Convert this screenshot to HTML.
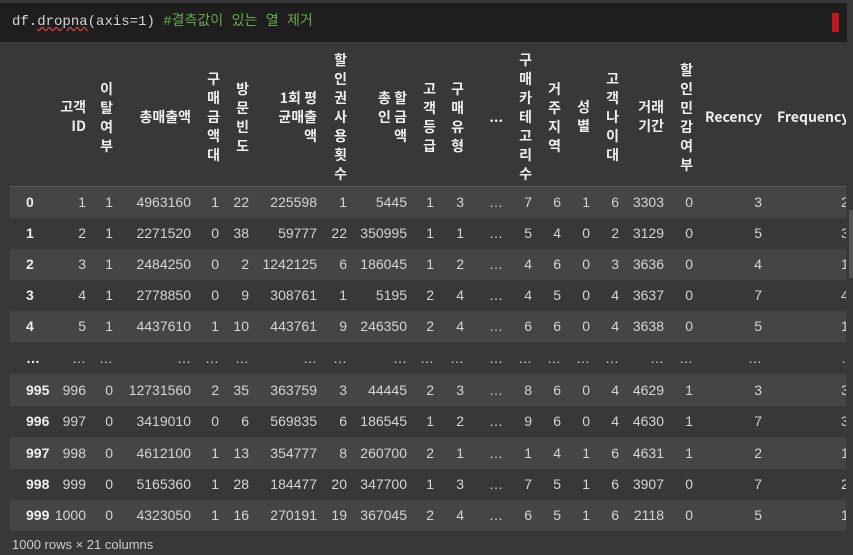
<!DOCTYPE html>
<html><head><meta charset="utf-8"><style>
*{margin:0;padding:0;box-sizing:border-box}
body{width:853px;height:555px;background:#383838;overflow:hidden;position:relative;font-family:"Liberation Sans","Noto Sans CJK KR",sans-serif;color:#d4d4d4}
.code{position:absolute;left:0;top:3px;width:847px;height:39px;background:#1e1e1e;font-family:"Liberation Mono","Noto Sans CJK KR",monospace;font-size:14px;line-height:39px;padding-left:12px;color:#d4d4d4}
.code .cm{color:#6aa84f}
.code u{text-decoration:underline wavy #c04040}
.cur{position:absolute;left:832px;top:13px;width:7px;height:19px;background:#c0181a}
.tbl{position:absolute;left:10px;top:42px;width:836px;height:490px;overflow:hidden}
.hd{position:absolute;left:0;top:0;width:836px;height:145px;border-bottom:1px solid #555}
.h{position:absolute;text-align:right;color:#eee;font-family:"Noto Sans CJK KR","Liberation Sans",sans-serif;font-weight:bold;font-size:14px;line-height:19px;white-space:pre;transform:translateX(-10px)}
.r{position:absolute;left:0;width:836px;font-size:14px}
.r.s{background:#454545}
.r span{position:absolute;top:0;text-align:right;transform:translateX(-10px)}
.r span.i{left:26px;font-weight:bold;color:#eee}
.r span.f{left:841px}
.ft{position:absolute;left:12px;top:537px;font-size:13px;color:#ccc}
.sb{position:absolute;left:849px;top:210px;width:4px;height:68px;background:#555}
</style></head><body>
<div class="code">df.<u>dropna</u>(axis=1) <span class="cm">#결측값이 있는 열 제거</span></div>
<div class="cur"></div>
<div class="tbl">
<div class="hd">
<div class="h" style="right:750px;top:56px">고객
ID</div>
<div class="h" style="right:723px;top:38px">이
탈
여
부</div>
<div class="h" style="right:645px;top:66px">총매출액</div>
<div class="h" style="right:616px;top:28px">구
매
금
액
대</div>
<div class="h" style="right:587px;top:38px">방
문
빈
도</div>
<div class="h" style="right:519px;top:47px">1회 평
균매출
액</div>
<div class="h" style="right:489px;top:9px">할
인
권
사
용
횟
수</div>
<div class="h" style="right:429px;top:47px">총 할
인 금
   액</div>
<div class="h" style="right:400px;top:38px">고
객
등
급</div>
<div class="h" style="right:372px;top:38px">구
매
유
형</div>
<div class="h" style="right:333px;top:66px">...</div>
<div class="h" style="right:304px;top:9px">구
매
카
테
고
리
수</div>
<div class="h" style="right:275px;top:38px">거
주
지
역</div>
<div class="h" style="right:246px;top:56px">성
별</div>
<div class="h" style="right:217px;top:28px">고
객
나
이
대</div>
<div class="h" style="right:172px;top:56px">거래
기간</div>
<div class="h" style="right:143px;top:19px">할
인
민
감
여
부</div>
<div class="h" style="right:74px;top:66px">Recency</div>
<div class="h" style="left:777px;top:66px;text-align:left">Frequency</div>
</div>
</div>
<div style="position:absolute;left:10px;top:0;width:836px;height:555px;overflow:hidden">
<div class="r s" style="top:187px;height:31px;line-height:31px"><span class="i">0</span><span style="right:750px">1</span><span style="right:723px">1</span><span style="right:645px">4963160</span><span style="right:617px">1</span><span style="right:587px">22</span><span style="right:519px">225598</span><span style="right:489px">1</span><span style="right:429px">5445</span><span style="right:402px">1</span><span style="right:372px">3</span><span style="right:333px">…</span><span style="right:304px">7</span><span style="right:275px">6</span><span style="right:246px">1</span><span style="right:217px">6</span><span style="right:172px">3303</span><span style="right:143px">0</span><span style="right:74px">3</span><span class="f">2</span></div>
<div class="r" style="top:218px;height:31px;line-height:31px"><span class="i">1</span><span style="right:750px">2</span><span style="right:723px">1</span><span style="right:645px">2271520</span><span style="right:617px">0</span><span style="right:587px">38</span><span style="right:519px">59777</span><span style="right:489px">22</span><span style="right:429px">350995</span><span style="right:402px">1</span><span style="right:372px">1</span><span style="right:333px">…</span><span style="right:304px">5</span><span style="right:275px">4</span><span style="right:246px">0</span><span style="right:217px">2</span><span style="right:172px">3129</span><span style="right:143px">0</span><span style="right:74px">5</span><span class="f">3</span></div>
<div class="r s" style="top:249px;height:31px;line-height:31px"><span class="i">2</span><span style="right:750px">3</span><span style="right:723px">1</span><span style="right:645px">2484250</span><span style="right:617px">0</span><span style="right:587px">2</span><span style="right:519px">1242125</span><span style="right:489px">6</span><span style="right:429px">186045</span><span style="right:402px">1</span><span style="right:372px">2</span><span style="right:333px">…</span><span style="right:304px">4</span><span style="right:275px">6</span><span style="right:246px">0</span><span style="right:217px">3</span><span style="right:172px">3636</span><span style="right:143px">0</span><span style="right:74px">4</span><span class="f">1</span></div>
<div class="r" style="top:280px;height:31px;line-height:31px"><span class="i">3</span><span style="right:750px">4</span><span style="right:723px">1</span><span style="right:645px">2778850</span><span style="right:617px">0</span><span style="right:587px">9</span><span style="right:519px">308761</span><span style="right:489px">1</span><span style="right:429px">5195</span><span style="right:402px">2</span><span style="right:372px">4</span><span style="right:333px">…</span><span style="right:304px">4</span><span style="right:275px">5</span><span style="right:246px">0</span><span style="right:217px">4</span><span style="right:172px">3637</span><span style="right:143px">0</span><span style="right:74px">7</span><span class="f">4</span></div>
<div class="r s" style="top:311px;height:31px;line-height:31px"><span class="i">4</span><span style="right:750px">5</span><span style="right:723px">1</span><span style="right:645px">4437610</span><span style="right:617px">1</span><span style="right:587px">10</span><span style="right:519px">443761</span><span style="right:489px">9</span><span style="right:429px">246350</span><span style="right:402px">2</span><span style="right:372px">4</span><span style="right:333px">…</span><span style="right:304px">6</span><span style="right:275px">6</span><span style="right:246px">0</span><span style="right:217px">4</span><span style="right:172px">3638</span><span style="right:143px">0</span><span style="right:74px">5</span><span class="f">1</span></div>
<div class="r" style="top:342px;height:32px;line-height:32px"><span class="i">…</span><span style="right:750px">…</span><span style="right:723px">…</span><span style="right:645px">…</span><span style="right:617px">…</span><span style="right:587px">…</span><span style="right:519px">…</span><span style="right:489px">…</span><span style="right:429px">…</span><span style="right:402px">…</span><span style="right:372px">…</span><span style="right:333px">…</span><span style="right:304px">…</span><span style="right:275px">…</span><span style="right:246px">…</span><span style="right:217px">…</span><span style="right:172px">…</span><span style="right:143px">…</span><span style="right:74px">…</span><span class="f">…</span></div>
<div class="r s" style="top:374px;height:32px;line-height:32px"><span class="i">995</span><span style="right:750px">996</span><span style="right:723px">0</span><span style="right:645px">12731560</span><span style="right:617px">2</span><span style="right:587px">35</span><span style="right:519px">363759</span><span style="right:489px">3</span><span style="right:429px">44445</span><span style="right:402px">2</span><span style="right:372px">3</span><span style="right:333px">…</span><span style="right:304px">8</span><span style="right:275px">6</span><span style="right:246px">0</span><span style="right:217px">4</span><span style="right:172px">4629</span><span style="right:143px">1</span><span style="right:74px">3</span><span class="f">3</span></div>
<div class="r" style="top:406px;height:31px;line-height:31px"><span class="i">996</span><span style="right:750px">997</span><span style="right:723px">0</span><span style="right:645px">3419010</span><span style="right:617px">0</span><span style="right:587px">6</span><span style="right:519px">569835</span><span style="right:489px">6</span><span style="right:429px">186545</span><span style="right:402px">1</span><span style="right:372px">2</span><span style="right:333px">…</span><span style="right:304px">9</span><span style="right:275px">6</span><span style="right:246px">0</span><span style="right:217px">4</span><span style="right:172px">4630</span><span style="right:143px">1</span><span style="right:74px">7</span><span class="f">3</span></div>
<div class="r s" style="top:437px;height:32px;line-height:32px"><span class="i">997</span><span style="right:750px">998</span><span style="right:723px">0</span><span style="right:645px">4612100</span><span style="right:617px">1</span><span style="right:587px">13</span><span style="right:519px">354777</span><span style="right:489px">8</span><span style="right:429px">260700</span><span style="right:402px">2</span><span style="right:372px">1</span><span style="right:333px">…</span><span style="right:304px">1</span><span style="right:275px">4</span><span style="right:246px">1</span><span style="right:217px">6</span><span style="right:172px">4631</span><span style="right:143px">1</span><span style="right:74px">2</span><span class="f">1</span></div>
<div class="r" style="top:469px;height:31px;line-height:31px"><span class="i">998</span><span style="right:750px">999</span><span style="right:723px">0</span><span style="right:645px">5165360</span><span style="right:617px">1</span><span style="right:587px">28</span><span style="right:519px">184477</span><span style="right:489px">20</span><span style="right:429px">347700</span><span style="right:402px">1</span><span style="right:372px">3</span><span style="right:333px">…</span><span style="right:304px">7</span><span style="right:275px">5</span><span style="right:246px">1</span><span style="right:217px">6</span><span style="right:172px">3907</span><span style="right:143px">0</span><span style="right:74px">7</span><span class="f">2</span></div>
<div class="r s" style="top:500px;height:31px;line-height:31px"><span class="i">999</span><span style="right:750px">1000</span><span style="right:723px">0</span><span style="right:645px">4323050</span><span style="right:617px">1</span><span style="right:587px">16</span><span style="right:519px">270191</span><span style="right:489px">19</span><span style="right:429px">367045</span><span style="right:402px">2</span><span style="right:372px">4</span><span style="right:333px">…</span><span style="right:304px">6</span><span style="right:275px">5</span><span style="right:246px">1</span><span style="right:217px">6</span><span style="right:172px">2118</span><span style="right:143px">0</span><span style="right:74px">5</span><span class="f">1</span></div>
</div>
<div class="ft">1000 rows × 21 columns</div>
<div class="sb"></div>
</body></html>
